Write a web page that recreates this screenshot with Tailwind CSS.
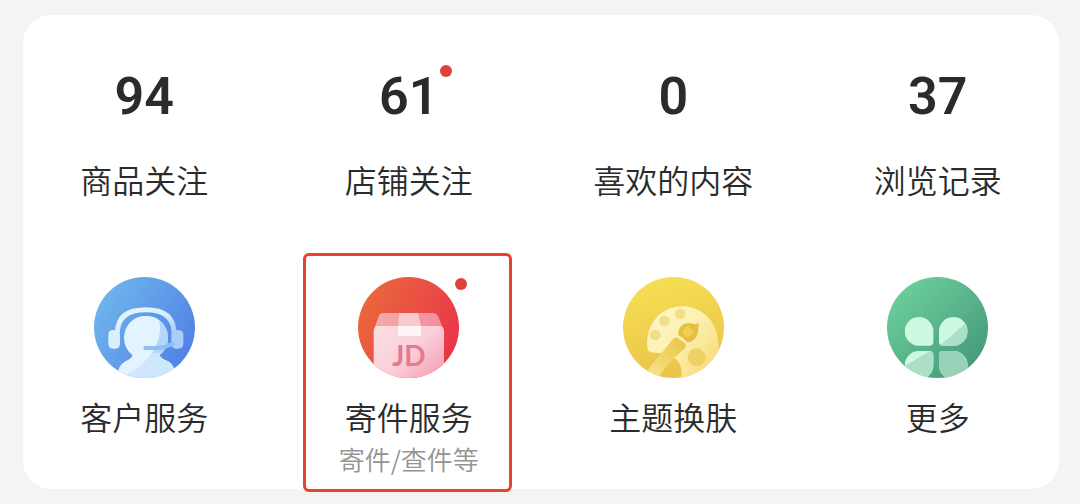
<!DOCTYPE html>
<html lang="zh-CN">
<head>
    <meta charset="UTF-8">
    <meta name="viewport" content="width=device-width, initial-scale=1.0">
    <title>我的</title>
    <script src="https://cdn.jsdelivr.net/npm/@tailwindcss/browser@4"></script>
</head>
<body class="bg-[#f4f4f4] font-['Noto_Sans_CJK_SC',sans-serif] font-[350] text-[#2b2b2b]">
    <main class="mt-[15px] mr-[21px] mb-[15px] ml-[23px] rounded-[28px] bg-white px-[17px] pt-[54px] pb-3.5">
        <!-- counters -->
        <section class="grid grid-cols-4 gap-x-14 text-center">
            <a href="#" class="flex flex-col items-center gap-[34px]">
                <span class="font-[Roboto,sans-serif] text-[52px] leading-14 font-semibold">94</span>
                <span class="text-[32px] leading-10 whitespace-nowrap">商品关注</span>
            </a>
            <a href="#" class="flex flex-col items-center gap-[34px]">
                <span class="relative font-[Roboto,sans-serif] text-[52px] leading-14 font-semibold">61
                    <i class="absolute -top-1 -right-3.5 size-3 rounded-full bg-[#df4139]"></i>
                </span>
                <span class="text-[32px] leading-10 whitespace-nowrap">店铺关注</span>
            </a>
            <a href="#" class="flex flex-col items-center gap-[34px]">
                <span class="font-[Roboto,sans-serif] text-[52px] leading-14 font-semibold">0</span>
                <span class="text-[32px] leading-10 whitespace-nowrap">喜欢的内容</span>
            </a>
            <a href="#" class="flex flex-col items-center gap-[34px]">
                <span class="font-[Roboto,sans-serif] text-[52px] leading-14 font-semibold">37</span>
                <span class="text-[32px] leading-10 whitespace-nowrap">浏览记录</span>
            </a>
        </section>

        <!-- services -->
        <section class="mt-[78px] grid grid-cols-4 gap-x-14 text-center">
            <a href="#" class="flex flex-col items-center gap-[18px]">
                <svg class="size-[101px]" viewBox="42 36 303 303" aria-hidden="true">
                    <defs>
                        <linearGradient id="blue" x1="0" y1="0.2" x2="1" y2="0.8"><stop offset="0" stop-color="#70b7ec"/><stop offset="1" stop-color="#4f7fe5"/></linearGradient>
                        <linearGradient id="blueFade" x1="0" y1="0" x2="1" y2="1"><stop offset="0" stop-color="#e5f6fe"/><stop offset="0.5" stop-color="#d9effe"/><stop offset="1" stop-color="#a5cbfa"/></linearGradient>
                        <clipPath id="round"><circle cx="193.500" cy="187.500" r="151.500"/></clipPath>
                        <clipPath id="person"><circle cx="198" cy="218" r="66"/><path d="M158 262Q160 280 136 289Q112 302 108 345H292Q286 302 264 289Q236 280 238 262Z"/></clipPath>
                    </defs>
                    <g clip-path="url(#round)">
                        <path d="M42 36h303v303H42z" fill="url(#blue)"/>
                        <g clip-path="url(#person)">
                            <path d="M100 140h200v210H100z" fill="#e4f4fe"/>
                            <path d="M228 140Q250 184 232 234Q208 294 136 334V350H310V140Z" fill="#b4d6fb"/>
                            <path d="M218 264Q186 306 136 330V350H310V264Z" fill="#cfe7fd"/>
                        </g>
                        <path d="M112 202Q114 134 197 134Q280 134 282 202" fill="none" stroke="url(#blueFade)" stroke-width="15"/>
                        <rect x="85" y="195" width="35" height="56" rx="14" fill="#d9f0fe"/>
                        <rect x="274" y="195" width="36" height="56" rx="14" fill="#a9cefa"/>
                        <path d="M196 249H236Q258 247 278 236" fill="none" stroke="#8fbdf5" stroke-width="12" stroke-linecap="round"/>
                    </g>
                </svg>
                <span class="text-[32px] leading-10 whitespace-nowrap">客户服务</span>
            </a>

            <a href="#" class="relative flex flex-col items-center">
                <span class="pointer-events-none absolute -top-6 right-px -bottom-[17px] -left-0.5 rounded-md border-[3px] border-[#e8412c]"></span>
                <span class="relative">
                    <svg class="size-[101px]" viewBox="42 36 303 303" aria-hidden="true">
                        <defs>
                            <linearGradient id="red" x1="0" y1="0.2" x2="1" y2="0.7"><stop offset="0" stop-color="#ea6b3b"/><stop offset="1" stop-color="#e9344a"/></linearGradient>
                            <linearGradient id="box" x1="0" y1="0.1" x2="1" y2="0.9"><stop offset="0" stop-color="#fcdde2"/><stop offset="0.5" stop-color="#fad0da"/><stop offset="1" stop-color="#f49db4"/></linearGradient>
                            <linearGradient id="lid" x1="0" y1="0" x2="1" y2="0"><stop offset="0" stop-color="#f6aaa9"/><stop offset="1" stop-color="#f38d9c"/></linearGradient>
                        </defs>
                        <g clip-path="url(#round)">
                            <path d="M42 36h303v303H42z" fill="url(#red)"/>
                            <path d="M118 144H268Q278 144 282 152L299 196H89L104 154Q108 144 118 144Z" fill="url(#lid)"/>
                            <path d="M105 183H284Q300 183 300 199V345H89V199Q89 183 105 183Z" fill="url(#box)"/>
                            <path d="M166 144H222L231 183H162Z" fill="#f9c9d0"/>
                            <path d="M162 183H231V213H162Z" fill="#fff5f5"/>
                            <text x="195" y="304" text-anchor="middle" font-size="84" class="fill-[#e47a8d] font-[Lato,sans-serif] font-bold">JD</text>
                        </g>
                    </svg>
                    <i class="absolute top-px -right-2 size-3 rounded-full bg-[#df4139]"></i>
                </span>
                <span class="mt-[18px] text-[32px] leading-10 whitespace-nowrap">寄件服务</span>
                <span class="mt-[7px] text-[26px] leading-8 whitespace-nowrap text-[#949494]">寄件/查件等</span>
            </a>

            <a href="#" class="flex flex-col items-center gap-[18px]">
                <svg class="size-[101px]" viewBox="42 36 303 303" aria-hidden="true">
                    <defs>
                        <linearGradient id="yellow" x1="0.2" y1="0" x2="0.5" y2="1"><stop offset="0" stop-color="#f7df55"/><stop offset="1" stop-color="#eac348"/></linearGradient>
                        <linearGradient id="palette" x1="0" y1="0" x2="1" y2="0.8"><stop offset="0" stop-color="#fdf5c8"/><stop offset="0.5" stop-color="#fcf1b3"/><stop offset="1" stop-color="#f6dc75"/></linearGradient>
                        <linearGradient id="handle" x1="1" y1="0" x2="0" y2="1"><stop offset="0" stop-color="#e9c545"/><stop offset="1" stop-color="#f8e695"/></linearGradient>
                    </defs>
                    <g clip-path="url(#round)">
                        <path d="M42 36h303v303H42z" fill="url(#yellow)"/>
                        <path d="M115 250C108 180 154 124 220 124C282 124 328 174 329 240C330 300 290 345 240 345H215Q224 308 204 286Q184 264 140 263Q118 264 115 250Z" fill="url(#palette)"/>
                        <g fill="#f2de86">
                            <circle cx="139" cy="210" r="16"/>
                            <circle cx="166" cy="168" r="16"/>
                            <circle cx="214" cy="147" r="16"/>
                        </g>
                        <circle cx="263" cy="277" r="27" fill="#eed163"/>
                        <path d="M194 220Q202 215 209 221L226 233Q233 239 229 248L190 285Q162 310 147 345H104Q118 306 146 278Z" fill="url(#handle)"/>
                        <path d="M208 210C207 184 224 172 243 175Q252 176 257 178Q265 176 271 175Q266 183 268 192C267 216 252 232 235 232Q221 216 208 210Z" fill="#e6bf3e"/>
                        <path d="M222 197Q228 184 240 180Q239 199 258 196Q250 215 235 216Q221 210 222 197Z" fill="#efd055"/>
                    </g>
                </svg>
                <span class="text-[32px] leading-10 whitespace-nowrap">主题换肤</span>
            </a>

            <a href="#" class="flex flex-col items-center gap-[18px]">
                <svg class="size-[101px]" viewBox="42 36 303 303" aria-hidden="true">
                    <defs>
                        <linearGradient id="green" x1="0.1" y1="0.1" x2="0.9" y2="0.9"><stop offset="0" stop-color="#6dcf9c"/><stop offset="1" stop-color="#46997a"/></linearGradient>
                        <clipPath id="petals">
                            <path d="M138 156A43 43 0 0 1 181 199V230Q181 242 169 242H138A43 43 0 0 1 138 156Z"/>
                            <path d="M241 156A43 43 0 0 1 241 242H210Q198 242 198 230V199A43 43 0 0 1 241 156Z"/>
                            <path d="M138 258H169Q181 258 181 270V301A43 43 0 1 1 138 258Z"/>
                            <path d="M210 258H241A43 43 0 1 1 198 301V270Q198 258 210 258Z"/>
                        </clipPath>
                    </defs>
                    <g clip-path="url(#round)">
                        <path d="M42 36h303v303H42z" fill="url(#green)"/>
                        <g clip-path="url(#petals)">
                            <path d="M90 150h210v200H90z" fill="#cdf9e2"/>
                            <path d="M300 156L207 236L90 306V350H300Z" fill="#acdfc7"/>
                            <path d="M190 250h110v100H190z" fill="#98d1b8"/>
                        </g>
                    </g>
                </svg>
                <span class="text-[32px] leading-10 whitespace-nowrap">更多</span>
            </a>
        </section>
    </main>
</body>
</html>
